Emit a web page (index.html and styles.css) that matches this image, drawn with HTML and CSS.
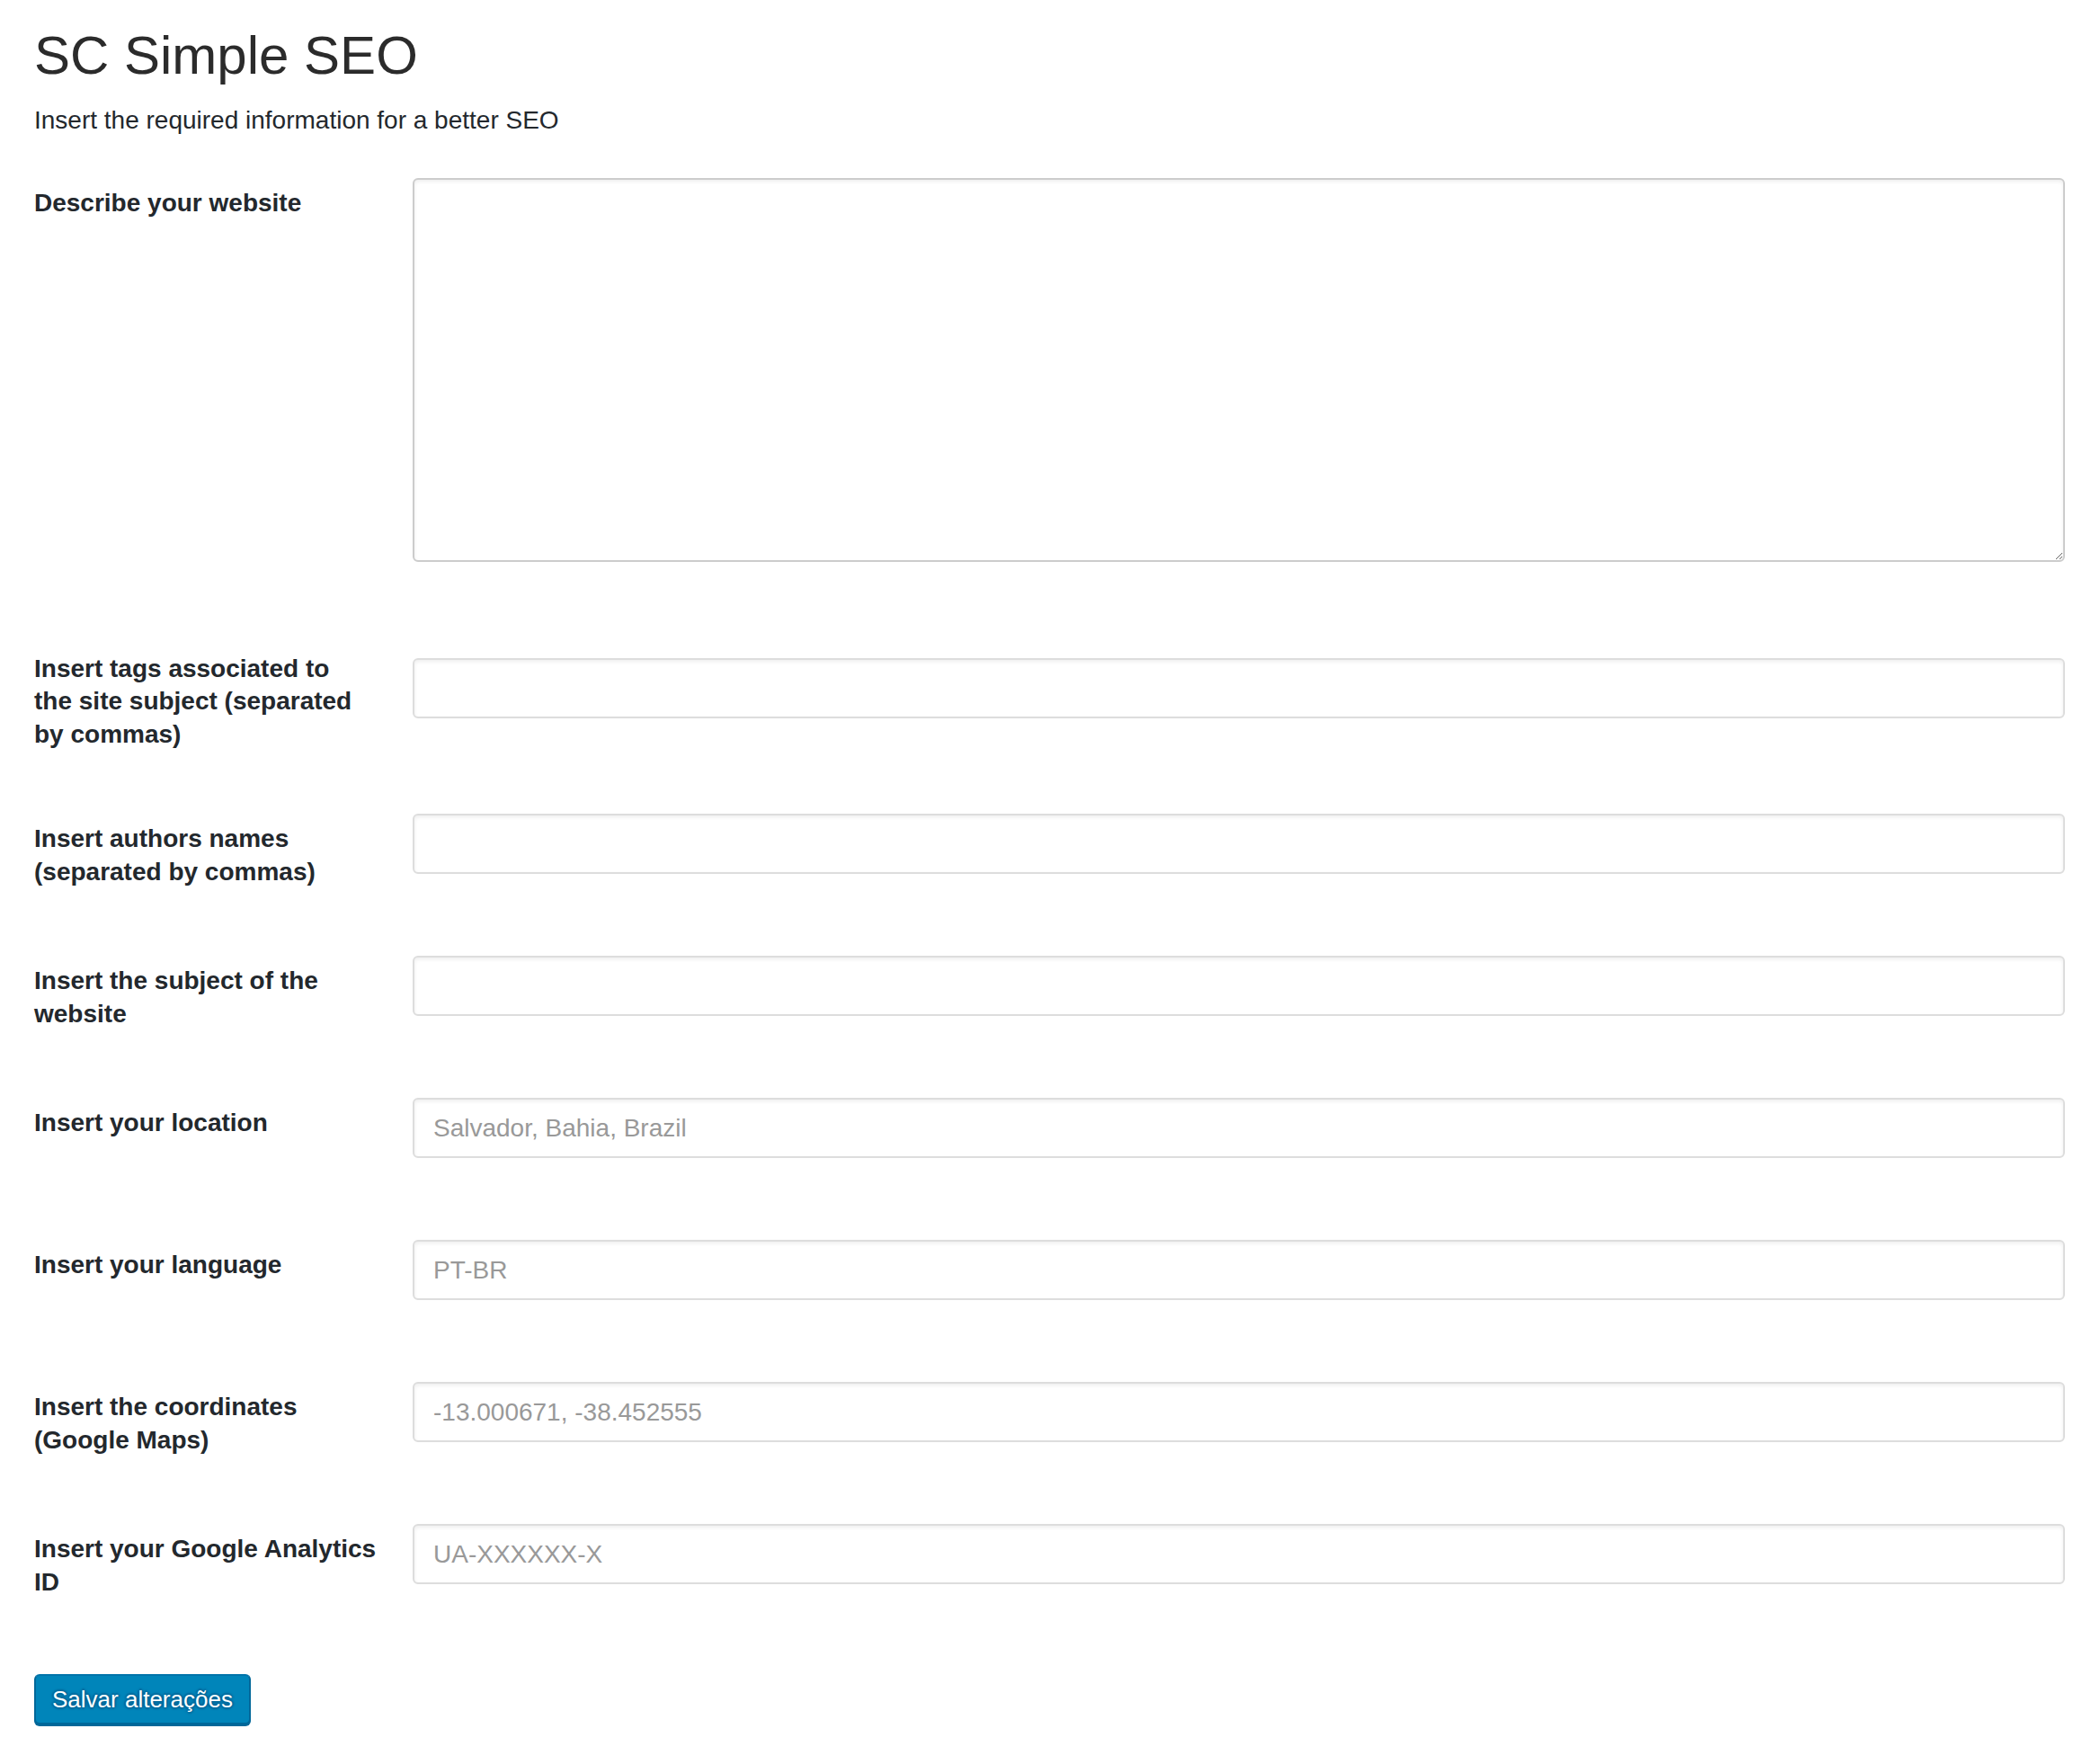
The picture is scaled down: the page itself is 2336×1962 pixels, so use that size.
FILE: index.html
```html
<!DOCTYPE html>
<html lang="en">
<head>
<meta charset="utf-8">
<title>SC Simple SEO</title>
<link rel="stylesheet" href="styles.css">
</head>
<body>
<div class="wrap">
  <h1 class="title">SC Simple SEO</h1>
  <p class="intro">Insert the required information for a better SEO</p>
  <form class="settings">
    <div class="form-grid">
      <label class="field-label" for="desc">Describe your website</label>
      <div class="field"><textarea id="desc" class="control textarea"></textarea></div>

      <label class="field-label" for="tags">Insert tags associated to<br>the site subject (separated by commas)</label>
      <div class="field"><input id="tags" class="control input" type="text"></div>

      <label class="field-label" for="authors">Insert authors names (separated by commas)</label>
      <div class="field"><input id="authors" class="control input" type="text"></div>

      <label class="field-label" for="subject">Insert the subject of the website</label>
      <div class="field"><input id="subject" class="control input" type="text"></div>

      <label class="field-label" for="location">Insert your location</label>
      <div class="field"><input id="location" class="control input" type="text" placeholder="Salvador, Bahia, Brazil"></div>

      <label class="field-label" for="language">Insert your language</label>
      <div class="field"><input id="language" class="control input" type="text" placeholder="PT-BR"></div>

      <label class="field-label" for="coords">Insert the coordinates (Google Maps)</label>
      <div class="field"><input id="coords" class="control input" type="text" placeholder="-13.000671, -38.452555"></div>

      <label class="field-label" for="ga">Insert your Google Analytics ID</label>
      <div class="field"><input id="ga" class="control input" type="text" placeholder="UA-XXXXXX-X"></div>
    </div>
    <div class="submit">
      <button type="button" class="button-primary">Salvar alterações</button>
    </div>
  </form>
</div>
</body>
</html>
```
FILE: styles.css
```css
html, body {
  margin: 0;
  padding: 0;
  background: #ffffff;
}

body {
  font-family: "Liberation Sans", Arial, Helvetica, sans-serif;
  color: #23282d;
}

.wrap {
  padding: 23px 39px 0 38px;
}

.title {
  margin: 0;
  font-size: 60px;
  font-weight: 400;
  line-height: 78px;
  color: #2b2b2b;
}

.intro {
  margin: 12px 0 0;
  font-size: 28px;
  line-height: 42px;
  color: #23282d;
}

.settings {
  margin: 0;
}

.form-grid {
  display: grid;
  grid-template-columns: 421px 1fr;
  margin-top: 13px;
}

.field-label {
  align-self: start;
  padding: 40px 39px 40px 0;
  font-size: 28px;
  font-weight: 700;
  line-height: 36.4px;
  color: #23282d;
}

.field {
  align-self: center;
  padding: 30px 0;
}

.control {
  display: block;
  box-sizing: border-box;
  width: 100%;
  margin: 0 0 31px;
  border: 2px solid #dddddd;
  border-radius: 6px;
  background: #ffffff;
  box-shadow: inset 0 2px 4px rgba(0, 0, 0, 0.07);
  font-family: "Liberation Sans", Arial, Helvetica, sans-serif;
  font-size: 28px;
  color: #32373c;
  outline: none;
}

.input {
  height: 67px;
  padding: 0 21px;
}

.input::placeholder {
  color: #999999;
  opacity: 1;
}

.textarea {
  height: 427px;
  padding: 6px 12px;
  border-color: #cccccc;
}

.submit {
  margin-top: 39px;
  padding-bottom: 40px;
}

.button-primary {
  box-sizing: border-box;
  height: 56px;
  margin: 0;
  padding: 0 18px;
  border: 2px solid;
  border-color: #0073aa #006799 #006799;
  border-radius: 6px;
  background: #0085ba;
  box-shadow: 0 2px 0 #006799;
  color: #ffffff;
  font-family: "Liberation Sans", Arial, Helvetica, sans-serif;
  font-size: 26px;
  line-height: 50px;
  text-shadow: 0 -2px 2px #006799, 2px 0 2px #006799, 0 2px 2px #006799, -2px 0 2px #006799;
  cursor: pointer;
}
```
